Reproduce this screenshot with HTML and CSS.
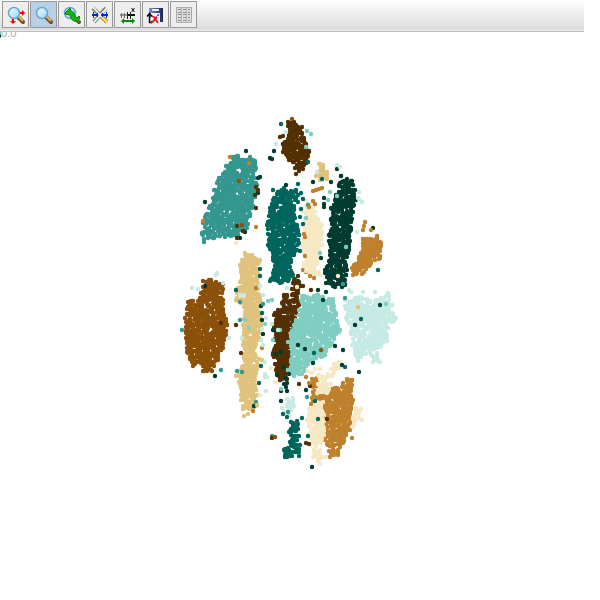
FILE: index.html
```
<!DOCTYPE html>
<html lang="en">
<head>
<meta charset="utf-8">
<title>Scatter plot</title>
<link rel="stylesheet" href="styles.css">
</head>
<body>
<header class="toolbar">
  <button class="tool" type="button" aria-label="Zoom and pan">
    <svg viewBox="0 0 21 21"><use href="#lens"/><path d="M15 8h2V6l3 3-3 3v-2h-2zM7 15h2v2h2l-3 3-3-3h2z" fill="#f00"/></svg>
  </button>
  <button class="tool active" type="button" aria-label="Zoom" aria-pressed="true">
    <svg viewBox="0 0 21 21"><use href="#lens"/></svg>
  </button>
  <button class="tool" type="button" aria-label="Restore view">
    <svg viewBox="0 0 21 21"><use href="#lens"/><path d="M4 9l5-5 1 3c3 1 4 3 4 6l2 1 2-2 1 1-2 4c-3 1-7 0-8-6l-5-1z" fill="#12b812" stroke="#0a7a12"/></svg>
  </button>
  <button class="tool" type="button" aria-label="Settings">
    <svg viewBox="0 0 21 21"><path d="M4 4l9 9M17 4L5 18" stroke="#777" stroke-width="4"/><path d="M4 3l9 10M18 4L5 18" stroke="#eee" stroke-width="2"/><path d="M13 13l5 5" stroke="#bf8e20" stroke-width="4"/><path d="M13 13l5 5" stroke="#ffe36d" stroke-width="2"/><path d="M3 11h6M12 11h7" stroke="#0028e8" stroke-width="2"/><path d="M4.500 8v6M8.500 9v4M13.500 9v4M17.500 8v6" stroke="#0028e8"/></svg>
  </button>
  <button class="tool" type="button" aria-label="X axis range">
    <svg viewBox="0 0 21 21"><path d="M3 11h8" stroke="#999" stroke-width="2"/><path d="M4.500 9v5M7.500 9v5" stroke="#666"/><path d="M10 11h8" stroke="#111" stroke-width="2"/><path d="M10.500 8v7M13.500 8v7" stroke="#222"/><path d="M14.500 4l3 4M17.500 4l-3 4" stroke="#111"/><path d="M6 17h10" stroke="#078b13" stroke-width="2"/><path d="M4 17l3-3v6zM18 17l-3-3v6z" fill="#078b13"/></svg>
  </button>
  <button class="tool" type="button" aria-label="Save axes">
    <svg viewBox="0 0 21 21"><path d="M4 4h14v14H4z" fill="url(#frame)"/><path d="M7 5h7v2H7z" fill="#e8edf8"/><path d="M6 9h9v7H6z" fill="#f3f5ff"/><path d="M2 14h4v6H2zM6 16h9v3H6z" fill="#eee"/><path d="M4.500 19V10M2 12.500l2.500-3 2.500 3M4 18.500h3" stroke="#111" stroke-width="1.500"/><path d="M6 18l3-2 4-5 2-1" stroke="#2632ff" stroke-width="1.500" stroke-dasharray="2 1"/><path d="M7 12l2 1 4 6M6 19l3-2 3-4" stroke="#f00" stroke-width="1.500"/></svg>
  </button>
  <button class="tool" type="button" aria-label="Data table">
    <svg viewBox="0 0 21 21"><path d="M3.500 3.500h15v15h-15z" fill="#ddd" stroke="#aaa"/><path d="M5 5.500h3M10 5.500h3M15 5.500h2M5 8.500h3M10 8.500h3M15 8.500h2M5 10.500h3M10 10.500h3M15 10.500h2M5 13.500h3M10 13.500h3M15 13.500h2M5 16.500h3M10 16.500h3M15 16.500h2" stroke="#909090"/><path d="M8.500 4v14M13.500 4v14" stroke="#b5b5b5"/></svg>
  </button>
</header>
<main class="plot">
  <span class="readout">0.0</span>
  <svg id="chart" class="chart" viewBox="0 32 600 568" role="img" aria-label="Coloured scatter clusters"></svg>
</main>
<svg class="defs" aria-hidden="true">
  <defs>
    <linearGradient id="glass" x1="0" y1="0" x2="1" y2="1"><stop offset="0" stop-color="#f0fcff"/><stop offset="1" stop-color="#98d8f8"/></linearGradient>
    <linearGradient id="frame" x1="0" y1="0" x2="1" y2="0"><stop offset="0" stop-color="#8095c5"/><stop offset="1" stop-color="#18254e"/></linearGradient>
    <g id="lens"><path d="M13 13l5 5" stroke="#665034" stroke-width="4" stroke-linecap="round"/><path d="M13 12l5 5" stroke="#f3b64b" stroke-width="2"/><circle cx="9" cy="9" r="5.500" fill="url(#glass)" stroke="#69a5cf" stroke-width="1.500"/></g>
  </defs>
</svg>
<script src="chart.js"></script>
</body>
</html>
```
FILE: styles.css
```
body {
  margin: 0;
  background: #fff;
  font-family: "Liberation Sans", Arial, sans-serif;
}
.toolbar {
  position: relative;
  z-index: 1;
  display: flex;
  gap: 1px;
  box-sizing: border-box;
  height: 32px;
  margin-right: 16px;
  padding: 1px 2px;
  border-bottom: 1px solid #bbb;
  background: linear-gradient(#fff, #dadada);
  box-shadow: inset 0 -1px #eee;
}
.tool {
  box-sizing: border-box;
  width: 27px;
  height: 27px;
  padding: 2px;
  border: 1px solid #999;
  background: #eee;
}
.tool.active { background: #b8cfe5; }
.tool svg { display: block; width: 21px; height: 21px; fill: none; }
.plot { position: relative; }
.readout {
  position: absolute;
  left: 1px;
  top: -5px;
  font-size: 11px;
  line-height: 12px;
  color: #aaa;
}
.chart { display: block; width: 100%; }
.defs { position: absolute; width: 0; height: 0; }
```
FILE: chart.js
```
const colors = {
  teal: "#35978f", umber: "#543005", deep: "#01665e", cream: "#f6e8c3",
  green: "#003c30", orange: "#bf812d", tan: "#dfc27d", brown: "#8c510a",
  aqua: "#80cdc1", pale: "#c7eae5"
};

// Cluster outlines, as x,y pairs.
const clusters = [
  ["teal", "231,157 238,156 243,160 250,157 255,161 256,168 254,178 257,185 255,197 252,208 250,216 247,228 238,235 225,237 214,238 204,242 202,234 203,222 209,208 214,190 219,178 229,166"],
  ["umber", "288,122 294,122 302,127 304,138 309,152 307,162 303,169 295,168 289,160 283,152 283,144 289,135"],
  ["deep", "278,192 284,188 291,191 296,190 298,202 294,215 297,225 299,235 297,250 291,262 293,275 288,281 280,283 270,281 275,266 268,245 267,225 270,208 274,198"],
  ["cream", "306,201 313,204 315,212 322,225 322,245 317,262 320,275 312,276 304,265 303,245 304,225 303,212"],
  ["green", "341,176 352,181 355,190 356,200 353,212 351,230 349,250 347,270 345,285 335,287 326,283 325,270 330,255 329,235 331,220 331,208 336,195 339,186"],
  ["orange", "363,239 377,236 381,243 380,258 370,265 362,274 353,275 352,268 359,257"],
  ["tan", "245,253 252,255 260,260 258,275 260,300 262,320 259,338 255,347 258,365 255,380 257,395 256,406 249,409 243,409 241,400 241,388 236,376 243,366 243,345 243,325 244,307 236,300 236,290 240,282 240,265"],
  ["tan", "319,164 323,165 327,172 327,179 320,180 316,176"],
  ["brown", "203,281 211,280 223,284 223,300 227,325 226,335 223,348 218,360 212,371 203,371 202,363 193,366 187,352 186,338 185,318 188,302 200,298"],
  ["umber", "293,283 298,281 303,286 298,290 292,289"],
  ["umber", "284,295 298,293 299,305 295,318 292,330 289,345 292,365 287,379 280,380 276,370 273,355 274,330 274,315 282,303"],
  ["aqua", "302,296 318,295 333,299 336,315 340,330 332,343 325,355 308,364 302,374 294,376 288,370 292,350 288,342 294,325 299,310"],
  ["pale", "345,300 360,297 375,301 388,294 392,305 396,318 388,328 387,341 380,347 366,354 358,361 352,345 351,332 346,318"],
  ["pale", "370,352 377,353 380,362 373,362"],
  ["pale", "287,399 293,398 294,406 289,416 286,412"],
  ["orange", "312,379 317,378 322,388 337,388 352,380 348,389 353,400 350,415 350,430 343,443 338,455 330,457 325,440 324,420 322,404 313,401"],
  ["orange", "347,379 352,380 352,400 346,400"],
  ["cream", "318,375 328,374 331,384 327,393 317,393"],
  ["cream", "334,364 339,362 340,368 333,374"],
  ["cream", "356,408 361,409 359,418 354,424 353,417"],
  ["cream", "309,409 317,402 323,402 324,421 324,435 320,450 326,457 320,464 313,457 313,443 309,434 307,420"],
  ["deep", "293,423 298,424 299,436 300,445 299,456 285,457 284,450 290,442 289,432"]
];

// Individual points, each as x,y.
const singles = [
  ["green", "246,151 270,158 272,159 260,177 258,178 258,193 286,185 274,151 337,169 341,176 331,182 313,182 324,198 324,204 324,207 240,238 245,232 205,286 342,365 359,372 205,202 215,376 254,406 262,320 263,334 261,306 273,330 276,354 277,375 281,391 287,391 281,401 306,390 318,290 326,292 340,279 342,287 323,300 305,349 313,363 335,346 380,305 373,228 312,467 343,350 286,378 289,374 287,383 284,384 286,387 281,352 283,367"],
  ["deep", "281,124 308,162 279,199 273,190 322,179 298,184 298,195 303,199 301,209 300,217 303,224 299,243 300,251 260,269 260,276 261,366 259,383 361,319 378,270 345,367 314,353 236,290 275,280 262,313 301,193 318,419 283,414 287,417 291,422 297,421 302,418 308,436 295,279 315,401"],
  ["teal", "226,166 221,370 182,330 240,320 263,304 242,372 272,436 307,397 343,284 308,205 288,412 237,371 256,402 240,302 345,298"],
  ["umber", "280,137 283,136 296,174 299,171 294,280 298,276 237,238 256,208 258,190 256,187 255,195 272,438 306,443 309,444 299,384 310,386 241,353 236,325 237,226 243,231 221,323 311,290 327,419"],
  ["brown", "292,119 239,181 242,225 275,437 321,350"],
  ["orange", "249,163 203,221 256,227 230,157 365,222 364,226 363,230 371,230 304,234 305,237 305,256 303,270 306,272 310,276 314,278 256,288 313,191 316,190 319,189 322,188 313,201 315,204 309,207 262,348 261,340 253,411 352,438 309,383 343,383 312,398 306,377 311,404"],
  ["cream", "236,243 271,368 275,382 260,395 297,287 308,371 315,369 320,369 331,369 332,376 353,427 362,420 312,373"],
  ["tan", "358,307 248,414 244,416 262,360 259,359 257,405"],
  ["aqua", "307,131 311,134 306,147 330,192 337,196 328,200 346,247 268,301 272,300 281,389 245,320 249,328 265,324 273,340 280,330 306,218 320,253 386,304"],
  ["pale", "276,144 286,132 317,172 337,165 340,167 359,192 362,202 359,199 217,273 192,288 198,289 223,283 216,275 240,295 244,295 357,232 260,286 263,295 266,318 262,329 272,324 278,330 261,340 263,345 242,338 229,338 265,377 265,374 267,377 265,362 266,391 282,408 363,292 375,292 388,293 349,290 351,292 356,356 358,198 287,288"]
];

// Repeatable pseudo-random sequence keeps the drawing stable between loads.
let seed = 17;
function random() {
  seed = (seed * 16807) % 2147483647;
  return seed / 2147483647;
}

function parse(list) {
  return list.split(" ").map(pair => pair.split(",").map(Number));
}

function inside(x, y, outline) {
  let result = false;
  for (let i = 0, j = outline.length - 1; i < outline.length; j = i++) {
    const [ax, ay] = outline[i];
    const [bx, by] = outline[j];
    if ((ay > y) !== (by > y) && x < (bx - ax) * (y - ay) / (by - ay) + ax) result = !result;
  }
  return result;
}

const chart = document.getElementById("chart");
function dot(color, x, y) {
  const node = document.createElementNS("http://www.w3.org/2000/svg", "circle");
  node.setAttribute("cx", Math.round(x));
  node.setAttribute("cy", Math.round(y));
  node.setAttribute("r", 2.2);
  node.setAttribute("fill", colors[color]);
  chart.append(node);
}

for (const [color, list] of clusters) {
  const outline = parse(list);
  for (const [x, y] of outline) dot(color, x, y);
  for (let y = 110; y < 470; y += 2) {
    for (let x = 180; x < 400; x += 2) {
      const px = x + random() * 2;
      const py = y + random() * 2;
      if (random() > 0.3 && inside(px, py, outline)) dot(color, px, py);
    }
  }
}
for (const [color, list] of singles) {
  for (const [x, y] of parse(list)) dot(color, x, y);
}

// Points inside the clusters and the two at the origin.
for (const [x, y] of parse("321,258 355,325 298,345")) dot("green", x, y);
for (const [x, y] of parse("338,276 306,271 315,244")) dot("cream", x, y);
dot("aqua", -1, 33);
dot("green", -1, 36);
```
